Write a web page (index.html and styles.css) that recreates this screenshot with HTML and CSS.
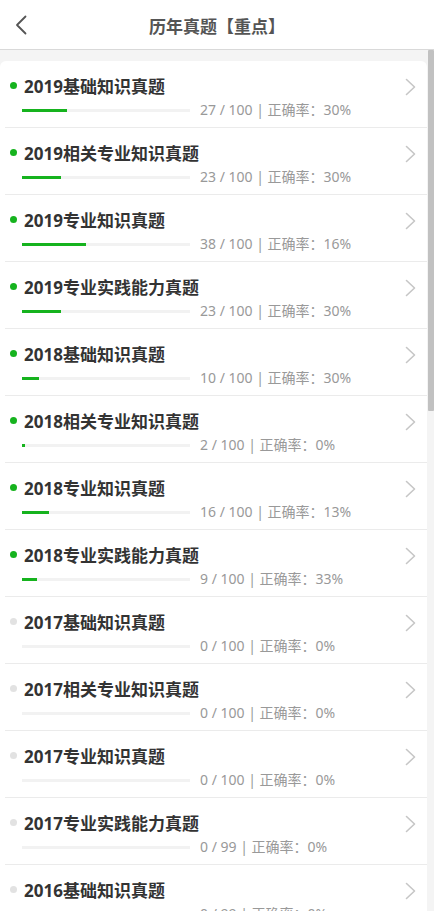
FILE: index.html
```html
<!DOCTYPE html>
<html lang="zh-CN">
<head>
<meta charset="utf-8">
<title>历年真题【重点】</title>
<link rel="stylesheet" href="styles.css">
</head>
<body>
<div class="app">
  <header class="topbar">
    <span class="back">
      <svg width="12" height="20" viewBox="0 0 12 20"><path d="M10.5 1.5 L2 10 L10.5 18.5" fill="none" stroke="#555" stroke-width="1.8" stroke-linecap="round" stroke-linejoin="round"/></svg>
    </span>
    <h1 class="title">历年真题【重点】</h1>
  </header>
  <div class="body">
    <div class="scroll">
      <ul class="card">
        <li class="row"><div class="main"><div class="head"><i class="dot on"></i><span class="name">2019基础知识真题</span></div><div class="sub"><span class="track"><span class="fill" style="width:27%"></span></span><span class="stat">27 / 100 | 正确率：30%</span></div></div><svg class="chev" width="11" height="18" viewBox="0 0 11 18"><path d="M1.5 1.5 L9.5 9 L1.5 16.5" fill="none" stroke="#c6c6c6" stroke-width="1.6" stroke-linecap="round" stroke-linejoin="round"/></svg></li>
        <li class="row"><div class="main"><div class="head"><i class="dot on"></i><span class="name">2019相关专业知识真题</span></div><div class="sub"><span class="track"><span class="fill" style="width:23%"></span></span><span class="stat">23 / 100 | 正确率：30%</span></div></div><svg class="chev" width="11" height="18" viewBox="0 0 11 18"><path d="M1.5 1.5 L9.5 9 L1.5 16.5" fill="none" stroke="#c6c6c6" stroke-width="1.6" stroke-linecap="round" stroke-linejoin="round"/></svg></li>
        <li class="row"><div class="main"><div class="head"><i class="dot on"></i><span class="name">2019专业知识真题</span></div><div class="sub"><span class="track"><span class="fill" style="width:38%"></span></span><span class="stat">38 / 100 | 正确率：16%</span></div></div><svg class="chev" width="11" height="18" viewBox="0 0 11 18"><path d="M1.5 1.5 L9.5 9 L1.5 16.5" fill="none" stroke="#c6c6c6" stroke-width="1.6" stroke-linecap="round" stroke-linejoin="round"/></svg></li>
        <li class="row"><div class="main"><div class="head"><i class="dot on"></i><span class="name">2019专业实践能力真题</span></div><div class="sub"><span class="track"><span class="fill" style="width:23%"></span></span><span class="stat">23 / 100 | 正确率：30%</span></div></div><svg class="chev" width="11" height="18" viewBox="0 0 11 18"><path d="M1.5 1.5 L9.5 9 L1.5 16.5" fill="none" stroke="#c6c6c6" stroke-width="1.6" stroke-linecap="round" stroke-linejoin="round"/></svg></li>
        <li class="row"><div class="main"><div class="head"><i class="dot on"></i><span class="name">2018基础知识真题</span></div><div class="sub"><span class="track"><span class="fill" style="width:10%"></span></span><span class="stat">10 / 100 | 正确率：30%</span></div></div><svg class="chev" width="11" height="18" viewBox="0 0 11 18"><path d="M1.5 1.5 L9.5 9 L1.5 16.5" fill="none" stroke="#c6c6c6" stroke-width="1.6" stroke-linecap="round" stroke-linejoin="round"/></svg></li>
        <li class="row"><div class="main"><div class="head"><i class="dot on"></i><span class="name">2018相关专业知识真题</span></div><div class="sub"><span class="track"><span class="fill" style="width:2%"></span></span><span class="stat">2 / 100 | 正确率：0%</span></div></div><svg class="chev" width="11" height="18" viewBox="0 0 11 18"><path d="M1.5 1.5 L9.5 9 L1.5 16.5" fill="none" stroke="#c6c6c6" stroke-width="1.6" stroke-linecap="round" stroke-linejoin="round"/></svg></li>
        <li class="row"><div class="main"><div class="head"><i class="dot on"></i><span class="name">2018专业知识真题</span></div><div class="sub"><span class="track"><span class="fill" style="width:16%"></span></span><span class="stat">16 / 100 | 正确率：13%</span></div></div><svg class="chev" width="11" height="18" viewBox="0 0 11 18"><path d="M1.5 1.5 L9.5 9 L1.5 16.5" fill="none" stroke="#c6c6c6" stroke-width="1.6" stroke-linecap="round" stroke-linejoin="round"/></svg></li>
        <li class="row"><div class="main"><div class="head"><i class="dot on"></i><span class="name">2018专业实践能力真题</span></div><div class="sub"><span class="track"><span class="fill" style="width:9%"></span></span><span class="stat">9 / 100 | 正确率：33%</span></div></div><svg class="chev" width="11" height="18" viewBox="0 0 11 18"><path d="M1.5 1.5 L9.5 9 L1.5 16.5" fill="none" stroke="#c6c6c6" stroke-width="1.6" stroke-linecap="round" stroke-linejoin="round"/></svg></li>
        <li class="row"><div class="main"><div class="head"><i class="dot"></i><span class="name">2017基础知识真题</span></div><div class="sub"><span class="track"><span class="fill" style="width:0%"></span></span><span class="stat">0 / 100 | 正确率：0%</span></div></div><svg class="chev" width="11" height="18" viewBox="0 0 11 18"><path d="M1.5 1.5 L9.5 9 L1.5 16.5" fill="none" stroke="#c6c6c6" stroke-width="1.6" stroke-linecap="round" stroke-linejoin="round"/></svg></li>
        <li class="row"><div class="main"><div class="head"><i class="dot"></i><span class="name">2017相关专业知识真题</span></div><div class="sub"><span class="track"><span class="fill" style="width:0%"></span></span><span class="stat">0 / 100 | 正确率：0%</span></div></div><svg class="chev" width="11" height="18" viewBox="0 0 11 18"><path d="M1.5 1.5 L9.5 9 L1.5 16.5" fill="none" stroke="#c6c6c6" stroke-width="1.6" stroke-linecap="round" stroke-linejoin="round"/></svg></li>
        <li class="row"><div class="main"><div class="head"><i class="dot"></i><span class="name">2017专业知识真题</span></div><div class="sub"><span class="track"><span class="fill" style="width:0%"></span></span><span class="stat">0 / 100 | 正确率：0%</span></div></div><svg class="chev" width="11" height="18" viewBox="0 0 11 18"><path d="M1.5 1.5 L9.5 9 L1.5 16.5" fill="none" stroke="#c6c6c6" stroke-width="1.6" stroke-linecap="round" stroke-linejoin="round"/></svg></li>
        <li class="row"><div class="main"><div class="head"><i class="dot"></i><span class="name">2017专业实践能力真题</span></div><div class="sub"><span class="track"><span class="fill" style="width:0%"></span></span><span class="stat">0 / 99 | 正确率：0%</span></div></div><svg class="chev" width="11" height="18" viewBox="0 0 11 18"><path d="M1.5 1.5 L9.5 9 L1.5 16.5" fill="none" stroke="#c6c6c6" stroke-width="1.6" stroke-linecap="round" stroke-linejoin="round"/></svg></li>
        <li class="row"><div class="main"><div class="head"><i class="dot"></i><span class="name">2016基础知识真题</span></div><div class="sub"><span class="track"><span class="fill" style="width:0%"></span></span><span class="stat">0 / 99 | 正确率：0%</span></div></div><svg class="chev" width="11" height="18" viewBox="0 0 11 18"><path d="M1.5 1.5 L9.5 9 L1.5 16.5" fill="none" stroke="#c6c6c6" stroke-width="1.6" stroke-linecap="round" stroke-linejoin="round"/></svg></li>
      </ul>
    </div>
    <div class="bar"><div class="thumb"></div></div>
  </div>
</div>
</body>
</html>
```

FILE: styles.css
```css
* { box-sizing: border-box; }
html, body { margin: 0; padding: 0; }
body {
  font-family: "Noto Sans", "Noto Sans CJK SC", sans-serif;
  background: #ffffff;
  color: #333;
}
.app {
  width: 434px;
  height: 911px;
  display: flex;
  flex-direction: column;
  overflow: hidden;
}
.topbar {
  height: 50px;
  flex: none;
  display: flex;
  align-items: center;
  justify-content: center;
  position: relative;
  background: #fff;
  border-bottom: 1px solid #d9d9d9;
}
.back {
  position: absolute;
  left: 15px;
  top: 15px;
  width: 12px;
  height: 20px;
  display: block;
}
.back svg { display: block; }
.title {
  margin: 0;
  padding-top: 4px;
  font-size: 17px;
  font-weight: 700;
  color: #555;
  line-height: 22px;
}
.body {
  flex: 1;
  display: flex;
  min-height: 0;
  background: #f4f4f4;
}
.scroll {
  flex: 1;
  overflow: hidden;
  padding-top: 11px;
}
.card {
  list-style: none;
  margin: 0 1px 0 0;
  padding: 0;
  background: #fff;
  border-radius: 6px 6px 0 0;
}
.row {
  display: flex;
  align-items: flex-start;
  height: 67px;
  margin-left: 5px;
  border-bottom: 1px solid #ebebeb;
}
.main {
  flex: 1;
  padding-top: 15px;
}
.head {
  display: flex;
  align-items: center;
  height: 22px;
}
.dot {
  width: 7px;
  height: 7px;
  border-radius: 50%;
  background: #e2e2e2;
  margin-left: 5px;
  margin-right: 7px;
  margin-top: -3px;
  flex: none;
}
.dot.on { background: #16b31e; }
.name {
  font-size: 17px;
  font-weight: 700;
  color: #333;
  line-height: 22px;
}
.sub {
  display: flex;
  align-items: center;
  height: 20px;
  margin-top: 2px;
  padding-left: 17px;
}
.track {
  width: 168px;
  height: 3px;
  background: #f2f2f2;
  display: block;
  flex: none;
}
.fill {
  display: block;
  height: 3px;
  background: #16b31e;
}
.stat {
  margin-left: 10px;
  font-size: 14px;
  color: #999;
  line-height: 20px;
  white-space: nowrap;
}
.chev {
  display: block;
  margin-top: 17px;
  margin-right: 11px;
  flex: none;
}
.bar {
  width: 6px;
  flex: none;
  background: #f4f4f4;
}
.thumb {
  width: 6px;
  height: 361px;
  background: #c1c1c1;
  border-radius: 1px;
}
```
